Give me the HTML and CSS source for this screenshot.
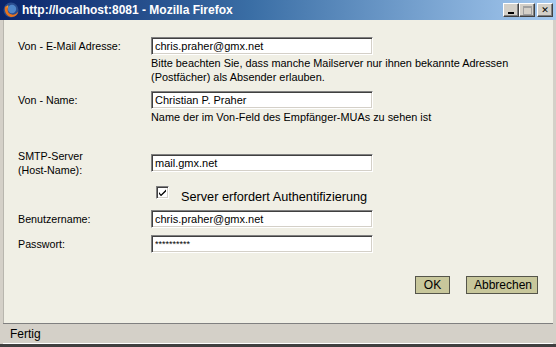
FILE: index.html
```html
<!DOCTYPE html>
<html lang="de">

<head>
    <meta charset="UTF-8">
    <meta name="viewport" content="width=device-width, initial-scale=1.0">
    <title>SMTP-Einstellungen</title>
    <link rel="stylesheet" href="styles.css">
</head>

<body>
    <div class="window">
        <!-- Title bar -->
        <div class="titlebar">
            <svg class="app-icon" width="16" height="16" viewBox="0 0 16 16">
                <circle cx="8" cy="8" r="7.5" fill="#2a4d8f"/>
                <circle cx="9" cy="7" r="4.2" fill="#4f86c9"/>
                <path d="M2.2 4.5 C1 8 2.5 13 7 14.8 C11.5 15.8 15 12.5 15.3 9.5 C13.5 12.5 9.5 13.5 6.8 11.8 C4.5 10.2 4.2 7.5 5.2 5.2 C4.5 4.8 3.5 4.2 2.2 4.5 Z" fill="#e8731e"/>
                <path d="M3 5.2 C3.6 3.8 4.6 3.2 5.4 3.6 C5.2 4.4 5.3 5 5.2 5.4 Z" fill="#f3a23a"/>
            </svg>
            <span class="title">http://localhost:8081 - Mozilla Firefox</span>
            <div class="controls">
                <span class="ctl ctl-min"></span>
                <span class="ctl ctl-max"></span>
                <span class="ctl ctl-close">&#x2715;</span>
            </div>
        </div>

        <div class="content">
            <form class="settings" id="smtpForm">
                <label for="fromAddress" class="label">Von - E-Mail Adresse:</label>
                <input type="text" id="fromAddress" class="field" value="chris.praher@gmx.net">
                <p class="hint">Bitte beachten Sie, dass manche Mailserver nur ihnen bekannte Adressen<br>(Postfächer) als Absender erlauben.</p>

                <label for="fromName" class="label">Von - Name:</label>
                <input type="text" id="fromName" class="field" value="Christian P. Praher">
                <p class="hint">Name der im Von-Feld des Empfänger-MUAs zu sehen ist</p>

                <label for="smtpHost" class="label label-spaced">SMTP-Server<br>(Host-Name):</label>
                <input type="text" id="smtpHost" class="field field-spaced" value="mail.gmx.net">

                <div class="auth-row">
                    <span class="checkbox"><svg width="9" height="9" viewBox="0 0 9 9"><path d="M1 4 L3 6.5 L8 1.5 L8 3.5 L3 8.3 L1 6 Z" fill="#000"/></svg></span>
                    <span class="auth-text">Server erfordert Authentifizierung</span>
                </div>

                <label for="userName" class="label">Benutzername:</label>
                <input type="text" id="userName" class="field" value="chris.praher@gmx.net">

                <label for="password" class="label label-pass">Passwort:</label>
                <input type="text" id="password" class="field field-pass password" value="**********">
            </form>

            <div class="actions">
                <button type="button" class="btn btn-ok">OK</button>
                <button type="button" class="btn btn-cancel">Abbrechen</button>
            </div>
        </div>

        <div class="statusbar">Fertig</div>
    </div>
</body>

</html>
```

FILE: styles.css
```css
body {
    margin: 0;
    padding: 0;
    font-family: "Liberation Sans", Arial, sans-serif;
    color: #000;
    background-color: #d4d0c8;
}

.window {
    width: 556px;
    height: 347px;
    display: flex;
    flex-direction: column;
    box-sizing: border-box;
    background-color: #d4d0c8;
    border-bottom: 3px solid #404040;
}

.titlebar {
    height: 20px;
    display: flex;
    align-items: center;
    padding-left: 3px;
    background: linear-gradient(to right, #0a246a 0%, #3a6ea5 45%, #a6caf0 100%);
    flex-shrink: 0;
}

.app-icon {
    flex-shrink: 0;
}

.title {
    margin-left: 3px;
    color: #fff;
    font-weight: bold;
    font-size: 12px;
}

.controls {
    margin-left: auto;
    margin-right: 3px;
    display: flex;
}

.ctl {
    width: 16px;
    height: 14px;
    box-sizing: border-box;
    background-color: #d4d0c8;
    border-top: 1px solid #fff;
    border-left: 1px solid #fff;
    border-right: 1px solid #404040;
    border-bottom: 1px solid #404040;
    box-shadow: inset -1px -1px 0 #808080;
    display: flex;
    align-items: center;
    justify-content: center;
    font-size: 10px;
    font-weight: bold;
}

.ctl-min::after {
    content: "";
    width: 6px;
    height: 2px;
    background: #000;
    margin-top: 6px;
}

.ctl-max::after {
    content: "";
    width: 7px;
    height: 6px;
    border: 1px solid #a0a0a0;
    border-top-width: 2px;
}

.ctl-close {
    margin-left: 2px;
    font-family: "DejaVu Sans", sans-serif;
    font-size: 9px;
}

.content {
    flex: 1;
    margin: 0 3px;
    border-left: 1px solid #b8b6ae;
    background-color: #f0efe5;
    padding: 17px 14px 0 14px;
    display: flex;
    flex-direction: column;
}

.settings {
    display: grid;
    grid-template-columns: 133px 1fr;
    align-items: center;
    font-size: 10.7px;
}

.label {
    line-height: 14px;
}

.field {
    width: 222px;
    height: 18px;
    box-sizing: border-box;
    margin: 0;
    padding: 0 0 0 3px;
    font-family: "Liberation Sans", Arial, sans-serif;
    font-size: 11px;
    background-color: #fff;
    border-top: 1px solid #808080;
    border-left: 1px solid #808080;
    border-right: 1px solid #fff;
    border-bottom: 1px solid #fff;
    box-shadow: inset 1px 1px 0 #404040, inset -1px -1px 0 #d4d0c8;
    outline: none;
}

.field-pass,
.label-pass {
    margin-top: 7px;
}

.password {
    font-size: 9px;
}

.hint {
    grid-column: 2;
    margin: 1px 0 7px 0;
    font-size: 10.9px;
    line-height: 14px;
}

.label-spaced,
.field-spaced {
    margin-top: 18px;
}

.auth-row {
    grid-column: 2;
    display: flex;
    align-items: flex-start;
    height: 20px;
    margin: 8px 0 5px 0;
}

.checkbox {
    width: 13px;
    height: 13px;
    box-sizing: border-box;
    margin-left: 5px;
    margin-top: 1px;
    background-color: #fff;
    border-top: 1px solid #808080;
    border-left: 1px solid #808080;
    border-right: 1px solid #fff;
    border-bottom: 1px solid #fff;
    box-shadow: inset 1px 1px 0 #404040, inset -1px -1px 0 #d4d0c8;
    display: flex;
    align-items: center;
    justify-content: center;
}

.auth-text {
    margin-left: 12px;
    margin-top: 3px;
    font-size: 12.7px;
    line-height: 18px;
}

.actions {
    display: flex;
    justify-content: flex-end;
    gap: 16px;
    margin-top: 23px;
    padding-right: 1px;
}

.btn {
    height: 18px;
    box-sizing: border-box;
    padding: 0 7px;
    font-family: "Liberation Sans", Arial, sans-serif;
    font-size: 12px;
    background-color: #c8c79b;
    border: 1px solid #55554a;
    color: #000;
    cursor: pointer;
}

.btn-ok {
    width: 35px;
}

.btn-cancel {
    width: 72px;
}

.statusbar {
    height: 21px;
    flex-shrink: 0;
    box-sizing: border-box;
    margin: 0 3px;
    border-top: 1px solid #808080;
    border-bottom: 1px solid #fff;
    padding-left: 7px;
    font-size: 12px;
    line-height: 20px;
    background-color: #d4d0c8;
}
```
